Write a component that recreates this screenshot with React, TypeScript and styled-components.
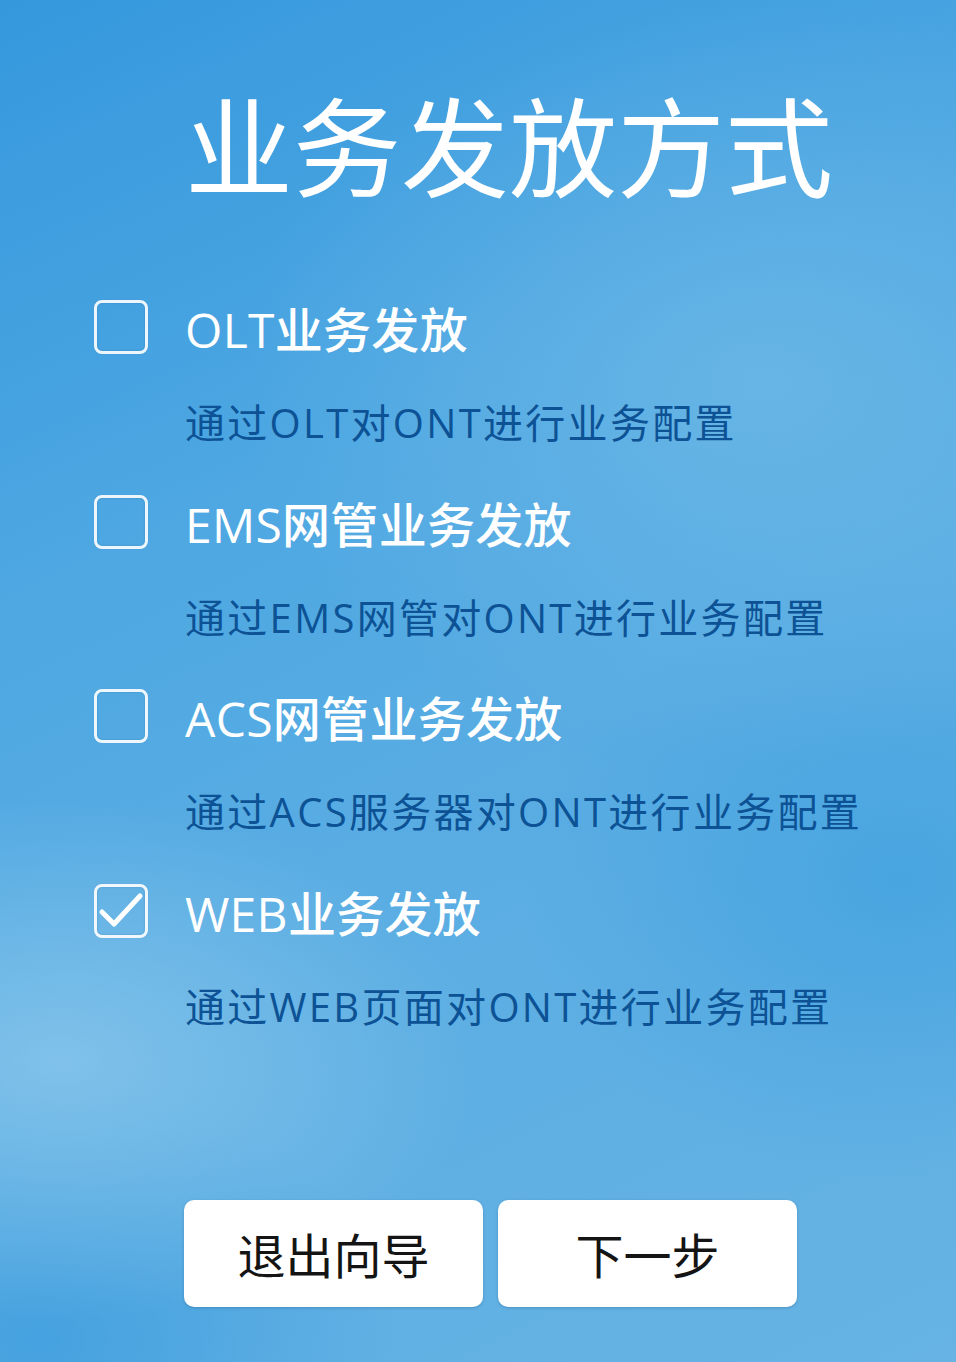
import styled, { createGlobalStyle } from 'styled-components'

const GlobalStyle = createGlobalStyle`
  html, body {
    margin: 0;
    padding: 0;
  }
  body {
    font-family: "Open Sans", "Noto Sans CJK SC", sans-serif;
  }
`

interface OptionItem {
  label: string
  desc: string
  checked: boolean
}

const options: OptionItem[] = [
  { label: 'OLT业务发放', desc: '通过OLT对ONT进行业务配置', checked: false },
  { label: 'EMS网管业务发放', desc: '通过EMS网管对ONT进行业务配置', checked: false },
  { label: 'ACS网管业务发放', desc: '通过ACS服务器对ONT进行业务配置', checked: false },
  { label: 'WEB业务发放', desc: '通过WEB页面对ONT进行业务配置', checked: true },
]

const CheckMark = () => (
  <svg width="54" height="54" viewBox="0 0 54 54">
    <polyline
      points="8,28 20,40 46,12"
      fill="none"
      stroke="#ffffff"
      strokeWidth="5"
      strokeLinecap="round"
      strokeLinejoin="round"
    />
  </svg>
)

export default function App() {
  return (
    <>
      <GlobalStyle />
      <Page>
        <Title>业务发放方式</Title>
        <OptionList>
          {options.map((o) => (
            <Option key={o.label}>
              <CheckBox>{o.checked && <CheckMark />}</CheckBox>
              <Label>{o.label}</Label>
              <Desc>{o.desc}</Desc>
            </Option>
          ))}
        </OptionList>
        <Buttons>
          <Button>退出向导</Button>
          <Button>下一步</Button>
        </Buttons>
      </Page>
    </>
  )
}

const Page = styled.div`
  width: 956px;
  height: 1362px;
  box-sizing: border-box;
  padding: 88px 0 0 94px;
  overflow: hidden;
  background:
    radial-gradient(ellipse 420px 260px at 60px 1060px, rgba(140, 200, 236, 0.75), rgba(140, 200, 236, 0) 100%),
    radial-gradient(ellipse 520px 380px at 760px 380px, rgba(120, 190, 232, 0.55), rgba(120, 190, 232, 0) 100%),
    radial-gradient(ellipse 380px 300px at 900px 880px, rgba(58, 158, 222, 0.6), rgba(58, 158, 222, 0) 100%),
    radial-gradient(ellipse 360px 260px at 40px 1340px, rgba(52, 152, 220, 0.6), rgba(52, 152, 220, 0) 100%),
    linear-gradient(155deg, #3598dd 0%, #4fa8e2 35%, #5caee3 65%, #66b3e4 100%);
`

const Title = styled.h1`
  margin: 0 0 0 91px;
  font-family: "Noto Sans CJK SC", sans-serif;
  font-size: 108px;
  line-height: 108px;
  font-weight: 400;
  color: #ffffff;
`

const OptionList = styled.div`
  margin-top: 107px;
  display: flex;
  flex-direction: column;
  gap: 49.5px;
`

const Option = styled.div`
  display: grid;
  grid-template-columns: 54px auto;
  column-gap: 37px;
  row-gap: 41px;
  align-items: start;
`

const CheckBox = styled.div`
  width: 54px;
  height: 54px;
  margin-top: -3px;
  box-sizing: border-box;
  border: 3px solid rgba(255, 255, 255, 0.9);
  border-radius: 8px;
  box-shadow: inset 0 0 2px rgba(0, 60, 120, 0.25), 0 0 1px rgba(0, 60, 120, 0.2);
  display: flex;
  align-items: center;
  justify-content: center;

  & svg {
    flex: none;
    margin: -3px;
  }
`

const Label = styled.div`
  font-size: 48px;
  line-height: 54px;
  font-weight: 500;
  color: #ffffff;
  white-space: nowrap;
  letter-spacing: 0.3px;
`

const Desc = styled.div`
  grid-column: 2;
  font-size: 40px;
  line-height: 50px;
  font-weight: 400;
  color: #0c5295;
  white-space: nowrap;
  letter-spacing: 2.3px;
`

const Buttons = styled.div`
  margin: 168px 0 0 90px;
  display: flex;
  gap: 15px;
`

const Button = styled.button`
  width: 299px;
  height: 107px;
  border: none;
  border-radius: 10px;
  background: #ffffff;
  box-shadow: 0 1px 3px rgba(0, 50, 100, 0.25);
  font-family: "Noto Sans CJK SC", sans-serif;
  font-size: 48px;
  font-weight: 400;
  color: #141414;
  padding: 0;
  cursor: pointer;
`
